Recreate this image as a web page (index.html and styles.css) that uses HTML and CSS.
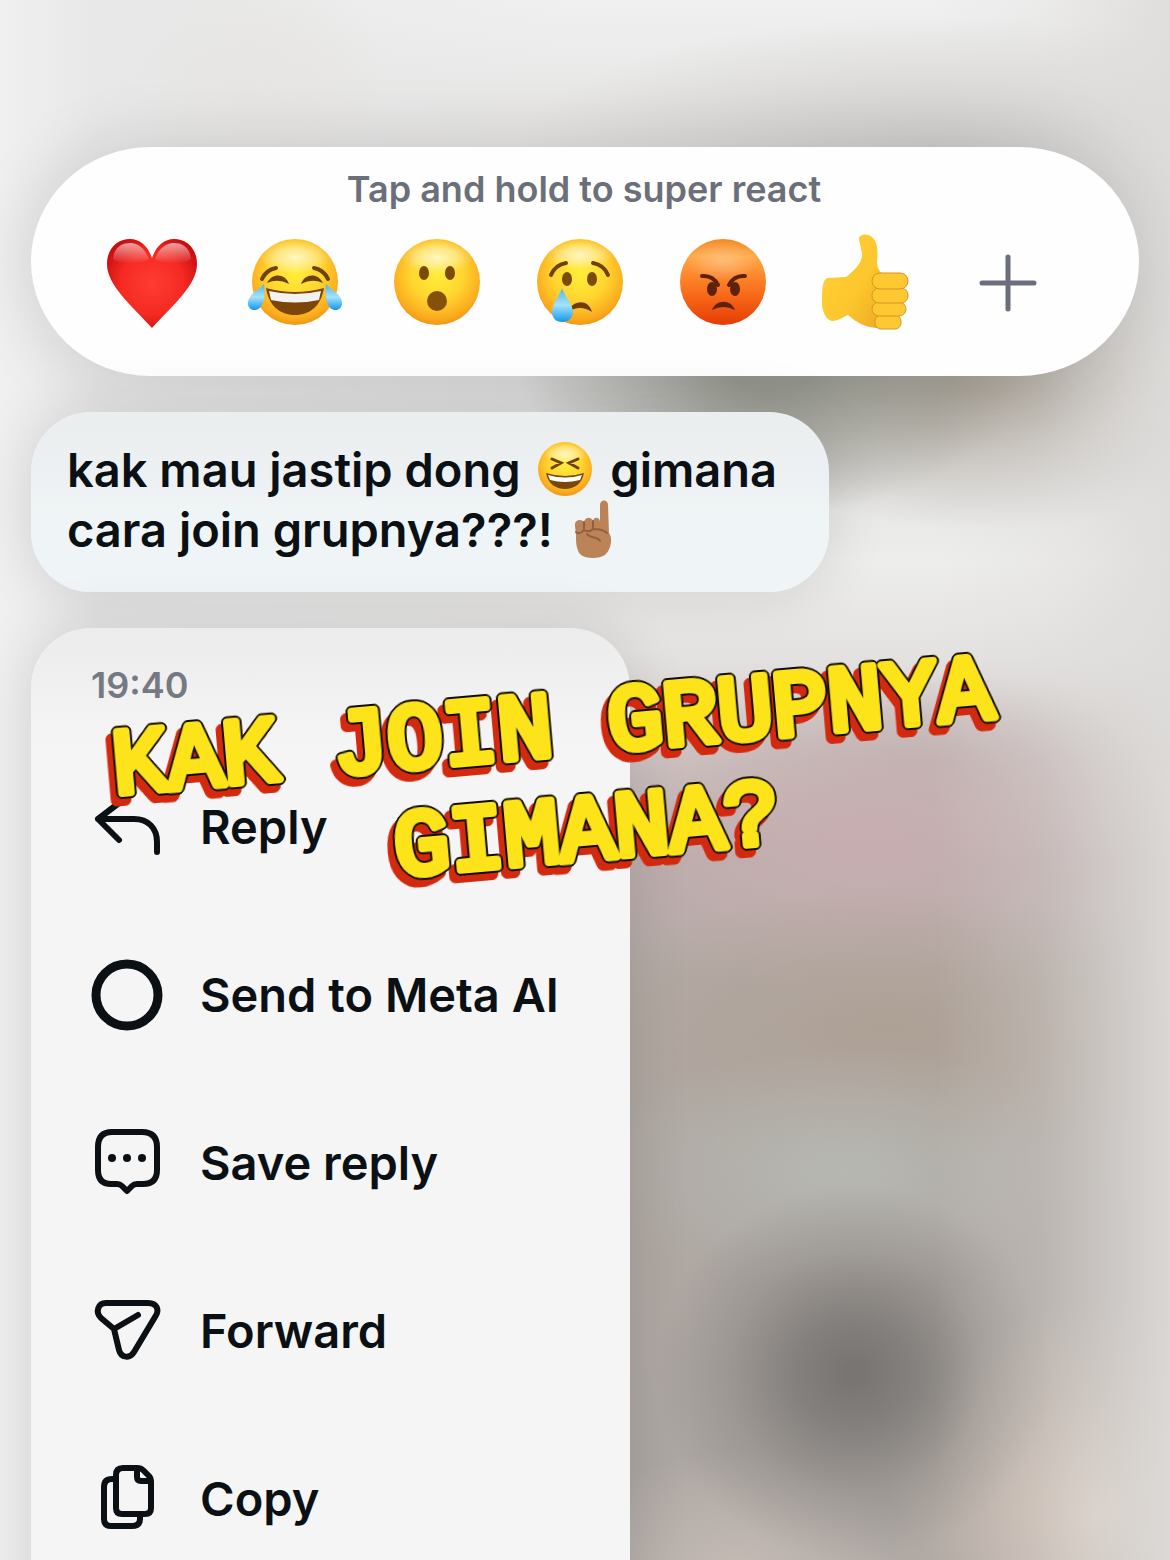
FILE: index.html
```html
<!DOCTYPE html>
<html lang="id">
<head>
    <meta charset="UTF-8">
    <meta name="viewport" content="width=device-width, initial-scale=1.0">
    <title>Message reactions</title>
    <link rel="stylesheet" href="styles.css">
</head>
<body>
    <!-- Shared gradients for the emoji -->
    <svg class="defs" aria-hidden="true">
        <defs>
            <radialGradient id="face" cx="50%" cy="40%" r="62%">
                <stop offset="0" stop-color="#ffee3a"/>
                <stop offset="0.5" stop-color="#ffd52f"/>
                <stop offset="0.85" stop-color="#fbab1e"/>
                <stop offset="1" stop-color="#ea920f"/>
            </radialGradient>
            <radialGradient id="shine">
                <stop offset="0" stop-color="#fff" stop-opacity="0.7"/>
                <stop offset="0.5" stop-color="#fff" stop-opacity="0.4"/>
                <stop offset="1" stop-color="#fff" stop-opacity="0"/>
            </radialGradient>
            <linearGradient id="gloss" x1="0" y1="0" x2="0" y2="1">
                <stop offset="0" stop-color="#fff" stop-opacity="0.75"/>
                <stop offset="1" stop-color="#fff" stop-opacity="0"/>
            </linearGradient>
            <linearGradient id="anger" x1="0" y1="0" x2="0" y2="1">
                <stop offset="0" stop-color="#f58a25"/>
                <stop offset="0.2" stop-color="#ffa745"/>
                <stop offset="0.6" stop-color="#fa701c"/>
                <stop offset="1" stop-color="#e63c05"/>
            </linearGradient>
            <radialGradient id="heart" cx="50%" cy="50%" r="58%">
                <stop offset="0" stop-color="#ff3d32"/>
                <stop offset="0.6" stop-color="#f52a22"/>
                <stop offset="1" stop-color="#c90d0f"/>
            </radialGradient>
            <linearGradient id="tear" x1="0" y1="0" x2="0" y2="1">
                <stop offset="0" stop-color="#4db4ea"/>
                <stop offset="0.5" stop-color="#a5e2fb"/>
                <stop offset="1" stop-color="#1297ec"/>
            </linearGradient>
            <linearGradient id="thumb" x1="0" y1="0" x2="1" y2="1">
                <stop offset="0" stop-color="#ffd23a"/>
                <stop offset="0.6" stop-color="#fdc62c"/>
                <stop offset="1" stop-color="#eba922"/>
            </linearGradient>
        </defs>
    </svg>

    <main class="overlay">
        <!-- Reaction picker -->
        <section class="reactions">
            <p class="hint">Tap and hold to super react</p>
            <div class="reaction-row">
                <button type="button" aria-label="Love">
                    <svg viewBox="0 0 96 96">
                        <path fill="url(#heart)" d="M48 23C44 11 36 4 26 4C13 4 3 14 3 29C3 50 27 70 48 93C69 70 93 50 93 29C93 14 83 4 70 4C60 4 52 11 48 23Z"/>
                        <path fill="url(#gloss)" opacity="0.8" d="M45 24C41 14 35 8 26 8C17 8 10 13 9 24C16 30 36 30 45 24ZM51 24C55 14 61 8 70 8C79 8 86 13 87 24C80 30 60 30 51 24Z"/>
                    </svg>
                </button>
                <button type="button" aria-label="Haha">
                    <svg viewBox="0 0 96 96">
                        <circle cx="48" cy="47" r="43" fill="url(#face)"/>
                        <ellipse cx="48" cy="22" rx="36" ry="17" fill="url(#shine)"/>
                        <path class="ink" d="M15 44Q19 35 29 33M67 33Q77 35 81 44"/>
                        <path fill="#6f4108" d="M20 48C25 38 38 38 42 49Q31 43 20 48ZM54 49C58 38 71 38 76 48Q65 43 54 49Z"/>
                        <path fill="#7b4607" d="M19 53Q48 61 77 53C74 71 63 80 48 80C33 80 22 71 19 53Z"/>
                        <path fill="#f4f1f3" d="M22 56Q48 62 74 56L72 65Q48 70 24 65Z"/>
                        <path fill="url(#tear)" d="M17 49C19 61 16 75 8 75C1 75 -1 68 3 62C6 57 12 55 17 49ZM79 49C77 61 80 75 88 75C95 75 97 68 93 62C90 57 84 55 79 49Z"/>
                    </svg>
                </button>
                <button type="button" aria-label="Wow">
                    <svg viewBox="0 0 96 96">
                        <circle cx="48" cy="47" r="43" fill="url(#face)"/>
                        <ellipse cx="48" cy="22" rx="36" ry="17" fill="url(#shine)"/>
                        <ellipse cx="35" cy="38" rx="5" ry="7" fill="#7b4a08"/>
                        <ellipse cx="61" cy="38" rx="5" ry="7" fill="#7b4a08"/>
                        <circle cx="48" cy="66" r="10" fill="#855008"/>
                    </svg>
                </button>
                <button type="button" aria-label="Sad">
                    <svg viewBox="0 0 96 96">
                        <circle cx="48" cy="47" r="43" fill="url(#face)"/>
                        <ellipse cx="48" cy="20" rx="34" ry="15" fill="url(#shine)"/>
                        <path class="ink" d="M19 40Q23 30 34 28M61 28Q72 30 76 40"/>
                        <ellipse cx="35" cy="44" rx="5" ry="7" fill="#7b4a08"/>
                        <ellipse cx="60" cy="44" rx="5" ry="7" fill="#7b4a08"/>
                        <path fill="#6d3c05" d="M36 77C39 66 56 62 60 77Q48 69 36 77Z"/>
                        <path fill="url(#tear)" d="M30 53C33 62 41 69 41 77C41 83 36 87 30 87C24 87 20 83 20 77C20 69 27 62 30 53Z"/>
                    </svg>
                </button>
                <button type="button" aria-label="Angry">
                    <svg viewBox="0 0 96 96">
                        <circle cx="48" cy="47" r="43" fill="url(#anger)"/>
                        <ellipse cx="48" cy="26" rx="36" ry="20" fill="url(#shine)" opacity="0.4"/>
                        <path class="ink angry" d="M27 41Q38 40 43 50M70 41Q59 40 54 50"/>
                        <ellipse cx="37" cy="54" rx="5" ry="7" fill="#5e220a"/>
                        <ellipse cx="60" cy="54" rx="5" ry="7" fill="#5e220a"/>
                        <path fill="#5e220a" d="M37 75C41 64 56 64 60 75Q48 69 37 75Z"/>
                    </svg>
                </button>
                <button type="button" aria-label="Like">
                    <svg viewBox="0 0 96 96">
                        <path fill="url(#thumb)" d="M42 5C41 -2 52 -2 56 3C61 8 61 18 60 26C60 33 62 36 66 39L60 93C48 92 40 88 31 80C26 82 21 86 15 86C8 84 4 75 5 61C5 50 7 43 11 43L29 42C36 36 46 28 45 18Z"/>
                        <g fill="#fdc832" stroke="#d9941f" stroke-width="1">
                            <rect x="58" y="80" width="26" height="14" rx="6"/>
                            <rect x="55" y="67" width="34" height="14" rx="7"/>
                            <rect x="55" y="53" width="36" height="15" rx="7"/>
                            <rect x="55" y="38" width="36" height="16" rx="8"/>
                        </g>
                    </svg>
                </button>
                <button type="button" aria-label="More reactions">
                    <svg viewBox="0 0 96 96">
                        <path class="plus" d="M48 22V74M22 48H74"/>
                    </svg>
                </button>
            </div>
        </section>

        <!-- Selected message -->
        <p class="bubble">
            kak mau jastip dong
            <svg class="emoji" viewBox="0 0 56 58" role="img" aria-label="Laughing">
                <circle cx="28" cy="29" r="27" fill="url(#face)"/>
                <ellipse cx="28" cy="14" rx="22" ry="11" fill="url(#shine)"/>
                <path class="ink small" d="M15 19L24 23L15 28M41 19L32 23L41 28"/>
                <path fill="#7b4607" d="M9 33Q28 39 47 33C45 44 37 49 28 49C19 49 11 44 9 33Z"/>
                <path fill="#fff" d="M11 35Q28 40 45 35L43 40Q28 44 13 40Z"/>
            </svg>
            gimana<br>
            cara join grupnya???!
            <svg class="emoji" viewBox="-4 0 56 58" role="img" aria-label="Index finger pointing up">
                <path fill="#bd8358" d="M26 22V5C26 -1 34 -1 34 5L35 33C39 38 37 50 31 55C25 59 12 59 7 55C2 50 2 42 2 35L1 26C0 20 7 18 10 22C11 17 17 16 19 21C20 16 26 17 26 22Z"/>
                <path class="knuckles" d="M10 22V30Q6 35 2 32M19 21V29Q15 33 10 30M19 29Q29 29 33 33M13 34C17 39 24 36 26 41"/>
            </svg>
        </p>

        <!-- Context menu -->
        <nav class="menu">
            <time class="time">19:40</time>
            <button type="button" class="menu-item">
                <svg viewBox="0 0 72 72"><path d="M28 12L7 28L28 49M7 28H43C57 28 66 37 66 51V61"/></svg>
                <span>Reply</span>
            </button>
            <button type="button" class="menu-item">
                <svg viewBox="0 0 72 72"><circle class="ring" cx="36" cy="36" r="31"/></svg>
                <span>Send to Meta AI</span>
            </button>
            <button type="button" class="menu-item">
                <svg viewBox="0 0 72 72">
                    <path d="M21 5H51Q66 5 66 20V43Q66 57 52 57H46Q43 57 41 59L36 64L31 59Q29 57 26 57H20Q7 57 7 43V20Q7 5 21 5Z"/>
                    <g class="dots"><circle cx="21" cy="31" r="4"/><circle cx="36" cy="31" r="4"/><circle cx="51" cy="31" r="4"/></g>
                </svg>
                <span>Save reply</span>
            </button>
            <button type="button" class="menu-item">
                <svg viewBox="0 0 72 72"><path d="M23 34L10 23C4 17 7 8 15 8H57C66 8 69 15 64 22L43 57C39 64 30 63 28 55ZM23 34L47 20"/></svg>
                <span>Forward</span>
            </button>
            <button type="button" class="menu-item">
                <svg viewBox="0 0 72 72">
                    <path d="M32 5H47Q50 5 52 7L58 13Q60 15 60 19V45Q60 51 54 51H31Q25 51 25 45V12Q25 5 32 5ZM46 6V14Q46 18 50 18H59M25 16H21Q13 16 13 24V56Q13 63 20 63H41Q49 63 49 56V51"/>
                </svg>
                <span>Copy</span>
            </button>
        </nav>

        <!-- Caption sticker -->
        <svg class="sticker" viewBox="0 0 960 240">
            <text x="480" y="86" text-anchor="middle">KAK JOIN GRUPNYA</text>
            <text x="505" y="192" text-anchor="middle">GIMANA?</text>
        </svg>
    </main>
</body>
</html>
```

FILE: styles.css
```css
* {
    box-sizing: border-box;
}

/* Out of focus chat behind the overlay */
body {
    margin: 0;
    height: 100vh;
    overflow: hidden;
    font-family: Inter, "Liberation Sans", sans-serif;
    font-weight: 600;
    color: #0b1014;
    background:
        linear-gradient(90deg, #f0f0f0, #e8e8e8 8%, rgba(230, 230, 230, 0) 48%),
        linear-gradient(90deg, rgba(222, 220, 218, 0) 80%, rgba(222, 220, 218, 0.25) 89%, rgba(222, 220, 218, 0.9) 100%),
        radial-gradient(ellipse 17% 12% at 73% 88%, #787572 5%, rgba(122, 119, 116, 0.8) 30%, rgba(130, 126, 123, 0.35) 65%, rgba(150, 146, 142, 0) 100%),
        radial-gradient(ellipse 18% 14% at 94% 97%, rgba(218, 203, 191, 0.9), rgba(212, 194, 180, 0.4) 55%, rgba(212, 194, 180, 0)),
        radial-gradient(ellipse 16% 8% at 63% 101%, rgba(200, 190, 184, 0.9), rgba(196, 184, 178, 0)),
        radial-gradient(ellipse 20% 8% at 72% 75%, rgba(183, 185, 179, 0.9), rgba(182, 184, 179, 0)),
        radial-gradient(ellipse 28% 9% at 76% 66%, rgba(172, 158, 145, 0.8), rgba(172, 158, 145, 0)),
        radial-gradient(ellipse 28% 10% at 74% 54%, rgba(202, 174, 177, 0.8) 10%, rgba(202, 174, 177, 0)),
        radial-gradient(ellipse 22% 6% at 78% 49%, rgba(184, 168, 167, 0.6), rgba(184, 168, 167, 0)),
        radial-gradient(ellipse 22% 10% at 66% 23%, rgba(148, 150, 140, 0.9) 20%, rgba(150, 152, 142, 0.4) 65%, rgba(150, 152, 142, 0) 100%),
        radial-gradient(ellipse 26% 10% at 84% 24%, rgba(166, 156, 144, 0.9) 10%, rgba(172, 164, 154, 0.4) 60%, rgba(172, 164, 154, 0)),
        radial-gradient(ellipse 36% 9% at 80% 10%, rgba(196, 194, 191, 0.7), rgba(200, 198, 195, 0)),
        radial-gradient(ellipse 14% 8% at 19% 5%, rgba(226, 222, 215, 0.8), rgba(226, 222, 215, 0)),
        linear-gradient(180deg, #f0f0f0 0%, #e6e5e4 8%, #dedede 25%, #ededec 36%, #e4e2e1 42%, #cbc4c2 49%, #b7adaa 55%, #b0a8a3 70%, #aca6a2 100%);
}

.defs {
    position: absolute;
    width: 0;
    height: 0;
}

button {
    padding: 0;
    border: none;
    background: none;
    font: inherit;
    color: inherit;
    cursor: pointer;
}

.overlay {
    position: relative;
    display: flex;
    flex-direction: column;
    align-items: flex-start;
    gap: 36px;
    padding: 147px 31px 0;
}

/* Reaction picker */
.reactions {
    width: 100%;
    height: 229px;
    padding: 24px 60px 0 50px;
    border-radius: 120px / 115px;
    background: #fefefe;
    box-shadow: 0 0 72px rgba(0, 0, 0, 0.14);
}

.hint {
    margin: 0 0 0 8px;
    font-size: 36px;
    line-height: 36px;
    text-align: center;
    color: #6a6f79;
}

.reaction-row {
    display: grid;
    grid-template-columns: repeat(7, 1fr);
    justify-items: center;
    margin-top: 28px;
}

.reaction-row svg {
    display: block;
    width: 96px;
    height: 96px;
    overflow: visible;
}

.ink {
    fill: none;
    stroke: #6f4108;
    stroke-width: 4;
    stroke-linecap: round;
}

.ink.small {
    stroke-width: 3;
}

.ink.angry {
    stroke: #5e220a;
}

.plus {
    stroke: #6a6f7b;
    stroke-width: 5;
    stroke-linecap: round;
}

/* Selected message */
.bubble {
    width: 798px;
    max-width: 100%;
    margin: 0;
    padding: 28px 36px 32px;
    border-radius: 60px;
    font-size: 47px;
    line-height: 60px;
    background: linear-gradient(180deg, #ebeeef, #eef1f3 40%, #eff5f6 60%);
    box-shadow: 0 0 60px rgba(0, 0, 0, 0.12);
}

.emoji {
    width: 56px;
    height: 58px;
    margin: -8px 5px;
    vertical-align: -3px;
}

.knuckles {
    fill: none;
    stroke: #935e3b;
    stroke-width: 2;
    stroke-linecap: round;
}

/* Context menu */
.menu {
    display: flex;
    flex-direction: column;
    width: 599px;
    max-width: 100%;
    padding: 39px 60px 60px;
    border-radius: 60px;
    background: linear-gradient(180deg, #ececec, #f5f5f5 120px);
    box-shadow: 0 0 60px rgba(0, 0, 0, 0.12);
}

.time {
    height: 76px;
    font-size: 36px;
    line-height: 36px;
    color: #757982;
}

.menu-item {
    display: flex;
    align-items: center;
    gap: 37px;
    height: 168px;
    font-size: 47px;
    line-height: 60px;
    text-align: left;
    white-space: nowrap;
}

.menu-item svg {
    flex: none;
    width: 72px;
    height: 72px;
    overflow: visible;
    fill: none;
    stroke: #0b1014;
    stroke-width: 6;
    stroke-linecap: round;
    stroke-linejoin: round;
}

.menu-item .ring {
    stroke-width: 9;
}

.menu-item .dots {
    fill: #0b1014;
    stroke: none;
}

/* Caption sticker lying over the menu */
.sticker {
    position: absolute;
    top: 669px;
    left: 78px;
    width: 960px;
    height: 240px;
    overflow: visible;
    font-family: "Liberation Mono", monospace;
    font-size: 92px;
    font-weight: 400;
    fill: #fde31a;
    stroke: #fde31a;
    stroke-width: 8;
    stroke-linejoin: round;
    stroke-linecap: round;
    transform: rotate(-5deg);
    filter:
        drop-shadow(1px 1px 0 #120c00)
        drop-shadow(-1px -1px 0 #120c00)
        drop-shadow(1px -1px 0 #120c00)
        drop-shadow(-1px 1px 0 #120c00)
        drop-shadow(-6px 7px 0 #d3290f);
}
```
